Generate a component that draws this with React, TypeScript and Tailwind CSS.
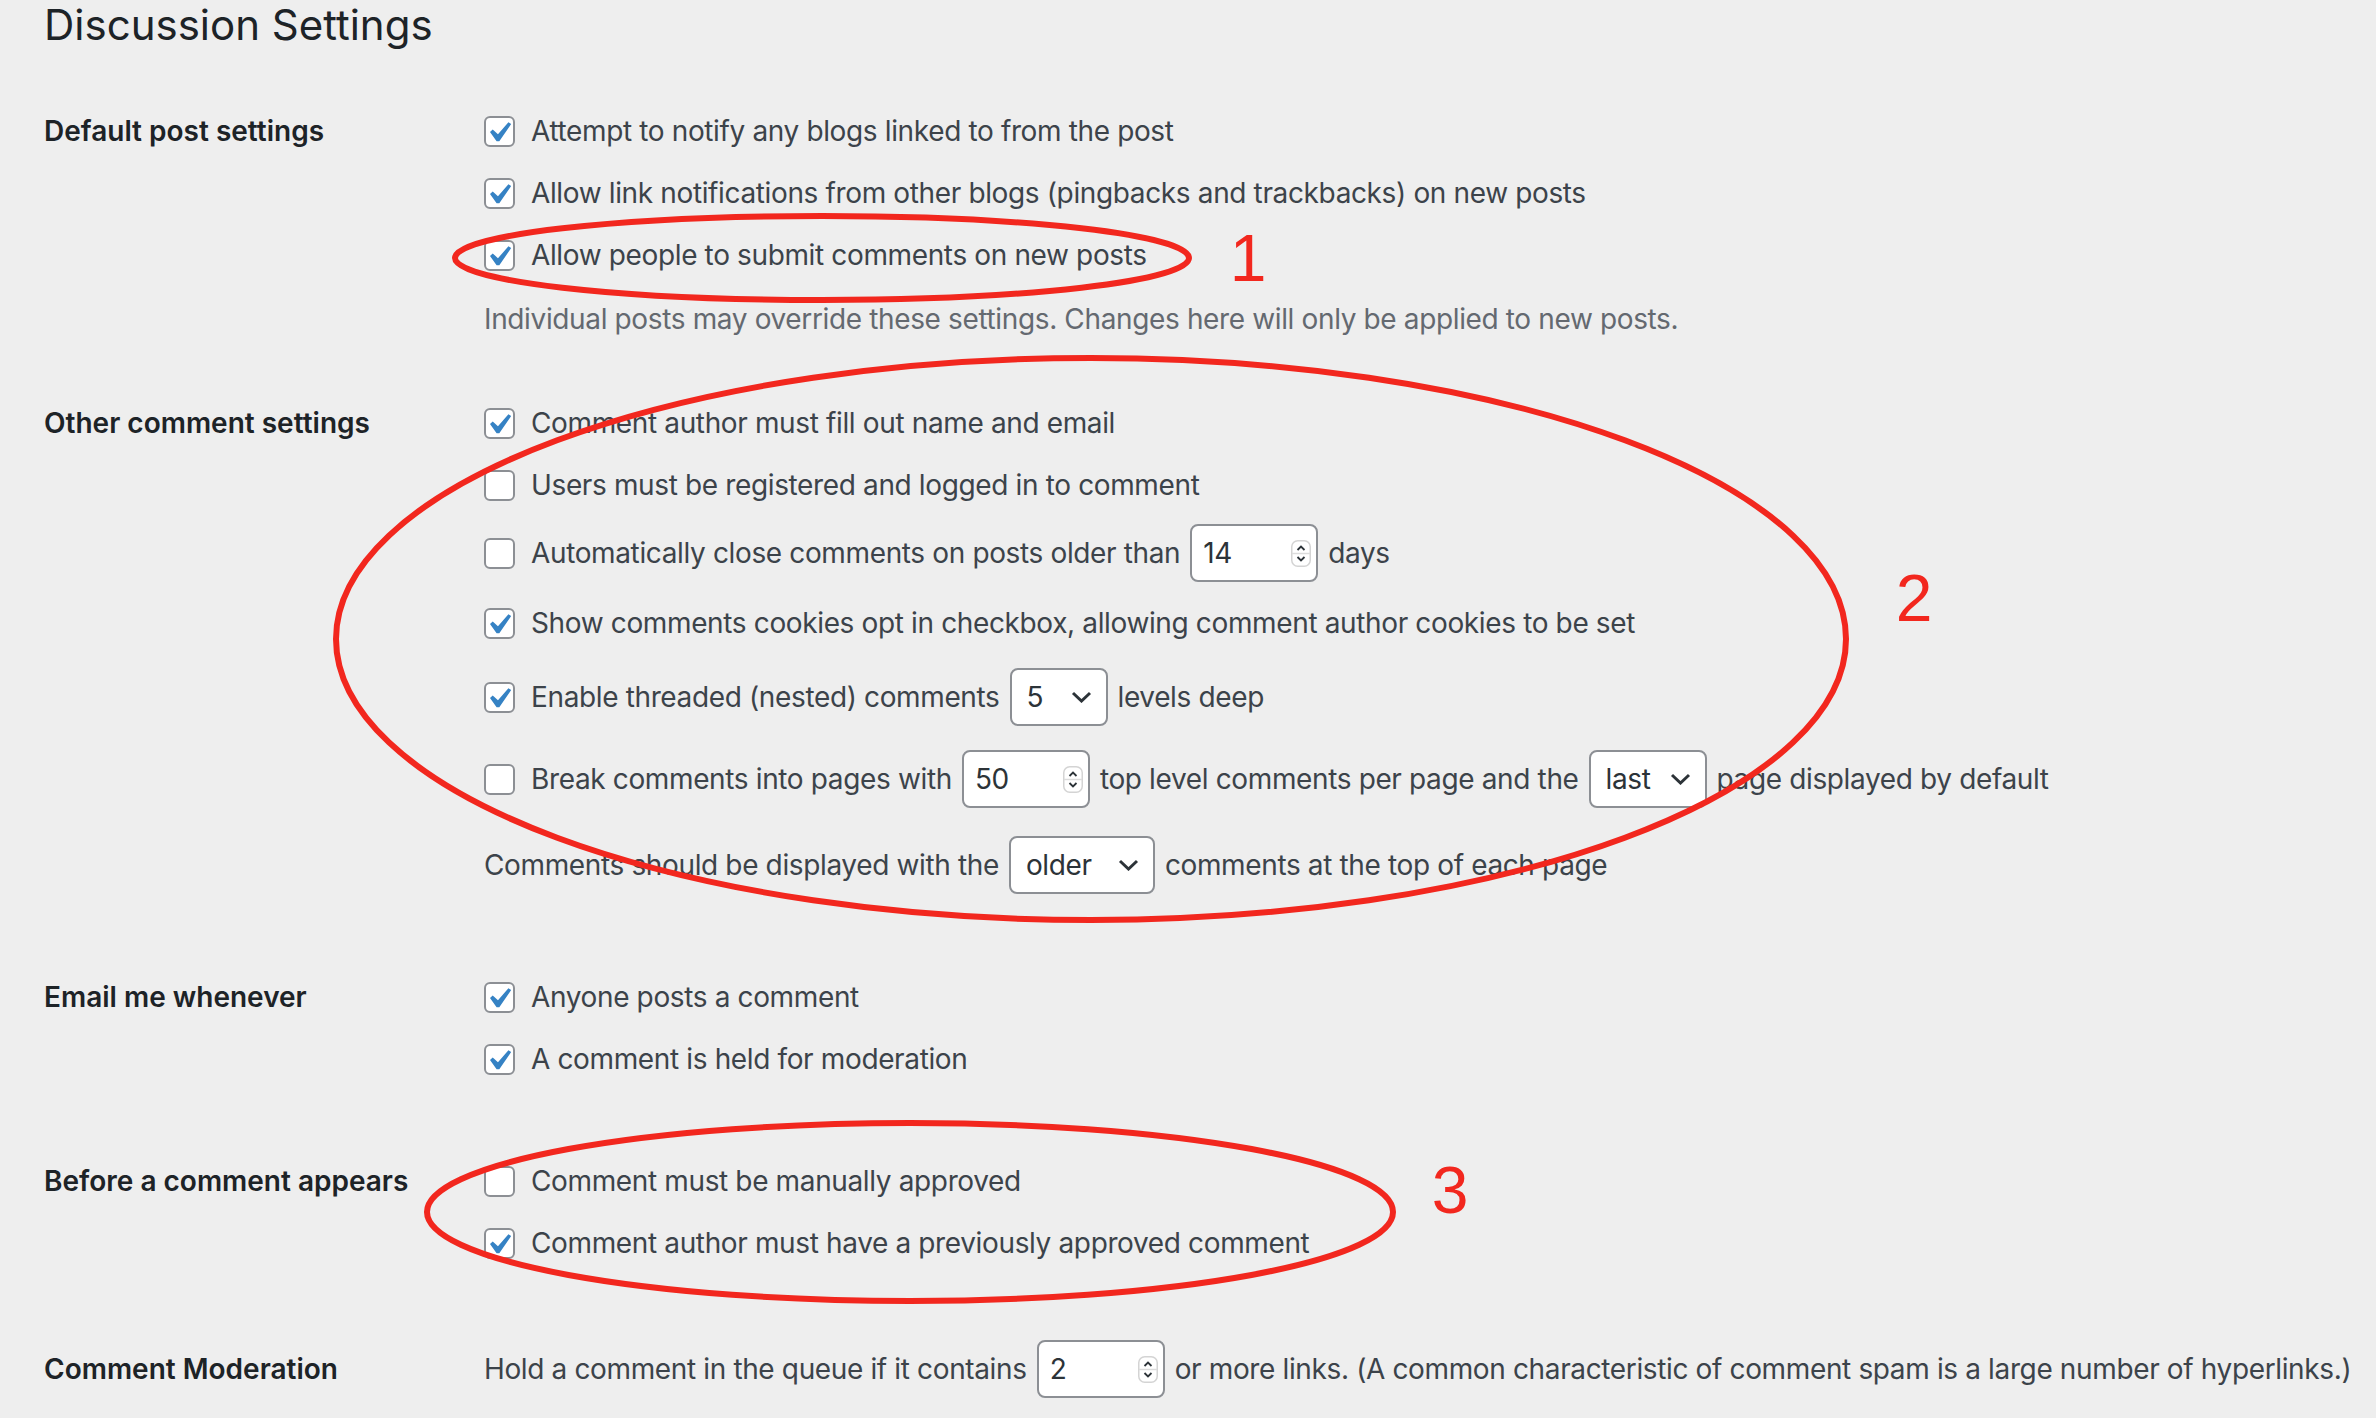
import React from 'react'

const CHECK_PATH = 'M14.83 4.89l1.34.94-5.81 8.38H9.02L5.78 9.67l1.34-1.25 2.57 2.4z'

function Checkbox({ checked }: { checked?: boolean }) {
  return (
    <span className="relative inline-block h-[31px] w-[31px] shrink-0 rounded-[6px] border-2 border-[#8c8f94] bg-white">
      {checked && (
        <svg className="absolute -left-[2px] -top-[2px] h-[31px] w-[31px]" viewBox="2.83 1.84 15.23 15.23">
          <path d={CHECK_PATH} fill="#3582c4" />
        </svg>
      )}
    </span>
  )
}

function Spinner() {
  return (
    <svg width="20" height="27" viewBox="0 0 20 27" className="shrink-0">
      <rect x="0.75" y="0.75" width="18.5" height="25.5" rx="6" fill="#fff" stroke="#d4d4d4" strokeWidth="1.5" />
      <line x1="1" y1="13.5" x2="19" y2="13.5" stroke="#dcdcdc" strokeWidth="1.5" />
      <polyline points="6.5,10 10,6.5 13.5,10" fill="none" stroke="#2c3338" strokeWidth="1.8" />
      <polyline points="6.5,17 10,20.5 13.5,17" fill="none" stroke="#2c3338" strokeWidth="1.8" />
    </svg>
  )
}

function NumberInput({ value }: { value: string }) {
  return (
    <span className="flex h-[58px] w-[128px] shrink-0 items-center justify-between rounded-[8px] border-2 border-[#8c8f94] bg-white pl-[11px] pr-[5px] text-[#2c3338]">
      <span>{value}</span>
      <Spinner />
    </span>
  )
}

function Select({ value, width }: { value: string; width: string }) {
  return (
    <span className={`flex h-[58px] shrink-0 items-center justify-between rounded-[8px] border-2 border-[#8c8f94] bg-white pl-[15px] pr-[14px] text-[#2c3338] ${width}`}>
      <span>{value}</span>
      <svg width="21" height="12" viewBox="0 0 21 12">
        <path d="M2 2 L10.5 10 L19 2" fill="none" stroke="#2c3338" strokeWidth="3" />
      </svg>
    </span>
  )
}

function Option({ checked, h = 'h-[62px]', children }: { checked?: boolean; h?: string; children: React.ReactNode }) {
  return (
    <div className={`flex items-center ${h}`}>
      <Checkbox checked={checked} />
      <div className="ml-[16px] flex items-center gap-[10px] whitespace-nowrap">{children}</div>
    </div>
  )
}

function Section({ label, className = '', children }: { label: string; className?: string; children: React.ReactNode }) {
  return (
    <div className={`grid grid-cols-[440px_1fr] ${className}`}>
      <div className="flex h-[62px] items-center font-semibold tracking-normal text-[#1d2327]">{label}</div>
      <div className="flex flex-col">{children}</div>
    </div>
  )
}

export default function App() {
  return (
    <div className="relative min-h-[1418px] overflow-hidden bg-[#eeeeee] pl-[44px] pt-[4px] font-['Inter',sans-serif] text-[28px] tracking-[-0.013em] text-[#3c434a]">
      <h1 className="text-[42px] leading-[42px] tracking-normal text-[#1d2327]">Discussion Settings</h1>

      <Section label="Default post settings" className="mt-[54px]">
        <Option checked>Attempt to notify any blogs linked to from the post</Option>
        <Option checked>Allow link notifications from other blogs (pingbacks and trackbacks) on new posts</Option>
        <Option checked>Allow people to submit comments on new posts</Option>
        <div className="flex h-[66px] items-center whitespace-nowrap text-[#646970]">
          Individual posts may override these settings. Changes here will only be applied to new posts.
        </div>
      </Section>

      <Section label="Other comment settings" className="mt-[40px]">
        <Option checked>Comment author must fill out name and email</Option>
        <Option>Users must be registered and logged in to comment</Option>
        <Option h="h-[74px]">
          <span>Automatically close comments on posts older than</span>
          <NumberInput value="14" />
          <span>days</span>
        </Option>
        <Option checked h="h-[66px]">Show comments cookies opt in checkbox, allowing comment author cookies to be set</Option>
        <Option checked h="h-[82px]">
          <span>Enable threaded (nested) comments</span>
          <Select value="5" width="w-[98px]" />
          <span>levels deep</span>
        </Option>
        <Option h="h-[82px]">
          <span>Break comments into pages with</span>
          <NumberInput value="50" />
          <span>top level comments per page and the</span>
          <Select value="last" width="w-[118px]" />
          <span>page displayed by default</span>
        </Option>
        <div className="flex h-[90px] items-center gap-[10px] whitespace-nowrap">
          <span>Comments should be displayed with the</span>
          <Select value="older" width="w-[146px]" />
          <span>comments at the top of each page</span>
        </div>
      </Section>

      <Section label="Email me whenever" className="mt-[56px]">
        <Option checked>Anyone posts a comment</Option>
        <Option checked>A comment is held for moderation</Option>
      </Section>

      <Section label="Before a comment appears" className="mt-[60px]">
        <Option>Comment must be manually approved</Option>
        <Option checked>Comment author must have a previously approved comment</Option>
      </Section>

      <Section label="Comment Moderation" className="mt-[64px]">
        <div className="flex h-[62px] items-center gap-[10px] whitespace-nowrap">
          <span>Hold a comment in the queue if it contains</span>
          <NumberInput value="2" />
          <span>or more links. (A common characteristic of comment spam is a large number of hyperlinks.)</span>
        </div>
      </Section>

      {/* red annotations drawn over the screenshot */}
      <svg className="pointer-events-none absolute left-0 top-0" width="2376" height="1418" viewBox="0 0 2376 1418">
        <g fill="none" stroke="#f2271e" strokeWidth="6">
          <ellipse cx="822" cy="258" rx="367" ry="42" />
          <ellipse cx="1091" cy="639" rx="755" ry="281" />
          <ellipse cx="910" cy="1212" rx="483" ry="89" />
        </g>
        <g fill="#f2271e" fontFamily="Liberation Sans, Arial, sans-serif" fontSize="66" textAnchor="middle">
          <text x="1248" y="281">1</text>
          <text x="1914" y="621">2</text>
          <text x="1450" y="1213">3</text>
        </g>
      </svg>
    </div>
  )
}
